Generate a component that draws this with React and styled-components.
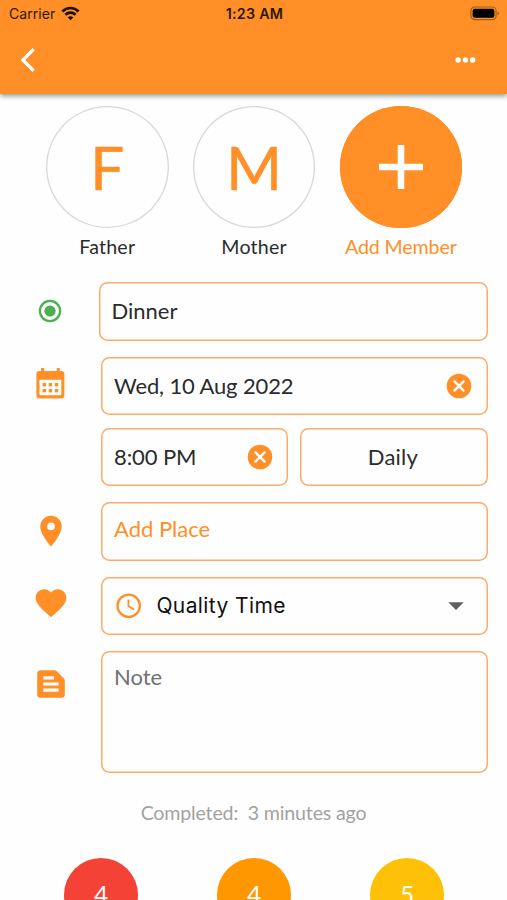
import React from "react";
import styled, { createGlobalStyle } from "styled-components";

const ORANGE = "#ff8f26";

const GlobalStyle = createGlobalStyle`
  *, *::before, *::after { box-sizing: border-box; }
  html, body { margin: 0; height: 100%; background: #fefefe; overflow: hidden; }
  svg { display: block; flex: none; }
`;

const Screen = styled.div`
  width: 507px;
  height: 900px;
  overflow: hidden;
  display: flex;
  flex-direction: column;
  background: #fefefe;
  font-family: Lato, sans-serif;
  color: #2b2b2d;
`;

const AppBar = styled.header`
  flex: none;
  height: 94px;
  background: ${ORANGE};
  box-shadow: 0 2px 5px rgba(0, 0, 0, 0.42);
`;

const StatusBar = styled.div`
  height: 26px;
  padding: 1px 7px 0 9px;
  display: grid;
  grid-template-columns: 1fr auto 1fr;
  align-items: center;
  font-family: Inter, sans-serif;
  font-size: 14px;
  line-height: 22px;
  color: #2b1804;
`;

const Carrier = styled.div`
  display: flex;
  align-items: center;
  gap: 6px;
  letter-spacing: 0.05px;
`;

const Clock = styled.div`
  font-weight: 600;
  font-size: 14.3px;
  letter-spacing: 0.25px;
`;

const BatterySlot = styled.div`
  display: flex;
  justify-content: flex-end;
`;

const Toolbar = styled.div`
  height: 67px;
  padding: 0 31px 0 20px;
  display: flex;
  align-items: center;
  justify-content: space-between;
`;

const IconButton = styled.button`
  display: block;
  padding: 0;
  border: 0;
  background: none;
`;

const Members = styled.section`
  flex: none;
  display: flex;
  gap: 24.3px;
  padding: 12px 0 0 46px;
`;

const Member = styled.div`
  width: 122.5px;
  display: flex;
  flex-direction: column;
  align-items: center;
`;

const Avatar = styled.div`
  width: 122.5px;
  height: 122px;
  border-radius: 50%;
  display: flex;
  align-items: center;
  justify-content: center;
  box-shadow: inset 0 0 0 1.3px ${(p) => (p.$filled ? ORANGE : "#d8d8da")};
  background: ${(p) => (p.$filled ? ORANGE : "transparent")};
  color: ${ORANGE};
  font-size: 60px;
  line-height: 60px;
  -webkit-text-stroke: 0.5px ${ORANGE};
`;

const MemberName = styled.div`
  margin-top: 7px;
  font-size: 19.6px;
  line-height: 24px;
  letter-spacing: ${(p) => (p.$accent ? "-0.1px" : "0.2px")};
  white-space: nowrap;
  color: ${(p) => (p.$accent ? ORANGE : "inherit")};
`;

const Form = styled.section`
  flex: none;
  display: flex;
  flex-direction: column;
  gap: 16px;
  padding: 23px 19.5px 0 0;
`;

const Row = styled.div`
  display: flex;
  align-items: flex-start;
`;

const RowIcon = styled.div`
  flex: none;
  width: ${(p) => p.$width || 101}px;
  height: 58.5px;
  padding-left: ${(p) => p.$left}px;
  padding-top: ${(p) => p.$top}px;
`;

const Fields = styled.div`
  flex: 1;
  display: grid;
  grid-template-columns: 1fr 1fr;
  gap: 12.5px 12px;
`;

const Field = styled.div`
  flex: 1;
  grid-column: ${(p) => (p.$half ? "auto" : "1 / -1")};
  height: ${(p) => p.$height || 58.5}px;
  display: flex;
  align-items: ${(p) => (p.$multiline ? "flex-start" : "center")};
  justify-content: ${(p) => (p.$centered ? "center" : "space-between")};
  padding: 0 ${(p) => p.$right || 15}px 0 13px;
  padding-top: ${(p) => (p.$multiline ? 12 : 0)}px;
  box-shadow: inset 0 0 0 1.5px #fbac68;
  border-radius: 8.5px;
`;

const FieldText = styled.span`
  font-size: 22px;
  line-height: 28px;
  letter-spacing: ${(p) => p.$spacing || 0}px;
  white-space: nowrap;
  color: ${(p) => p.$color || "inherit"};
  margin-bottom: ${(p) => p.$lift || 0}px;
`;

const Choice = styled.span`
  display: flex;
  align-items: center;
  gap: 13px;
  font-family: Inter, sans-serif;
  font-size: 21px;
  letter-spacing: 0.4px;
  color: #111;
`;

const Completed = styled.p`
  flex: none;
  margin: 28px 0 0;
  text-align: center;
  font-size: 19.6px;
  line-height: 24px;
  letter-spacing: -0.17px;
  white-space: pre;
  color: #a2a2a2;
`;

const Scores = styled.section`
  flex: none;
  display: flex;
  justify-content: space-between;
  padding: 33px 63px 0 64px;
`;

const Score = styled.div`
  width: 74px;
  height: 74px;
  border-radius: 50%;
  display: flex;
  align-items: center;
  justify-content: center;
  background: ${(p) => p.$color};
  color: #fff;
  font-size: 24.5px;
  line-height: 30px;
`;

const Wifi = () => (
  <svg width="19" height="15" viewBox="0 0 19 15" fill="none" stroke="#1f1002" strokeWidth="2.7">
    <path d="M1.4 5.5C6 .8 13 .8 17.6 5.5" />
    <path d="M4.4 8.8c2.9-2.8 7.3-2.8 10.2 0" />
    <path d="M9.5 14.3 6.7 11.4c1.5-1.4 4.1-1.4 5.6 0z" fill="#1f1002" stroke="none" />
  </svg>
);

const Battery = () => (
  <svg width="30" height="15" viewBox="0 0 30 15">
    <rect x="0.9" y="1" width="25.2" height="12.6" rx="3.8" fill="none" stroke="#a75d19" strokeWidth="1.2" />
    <rect x="2.6" y="2.8" width="21.8" height="9" rx="2.2" fill="#000" />
    <path d="M27.5 5.2c1.9.8 1.9 3.4 0 4.2z" fill="#a75d19" />
  </svg>
);

const Back = () => (
  <svg width="16" height="26" viewBox="0 0 16 26" fill="none" stroke="#fff" strokeWidth="3.3">
    <path d="M13.6 2.2 2.9 13 13.6 23.8" />
  </svg>
);

const More = () => (
  <svg width="21" height="8" viewBox="0 0 21 8" fill="#fff">
    <circle cx="3.1" cy="4" r="2.7" />
    <circle cx="10.4" cy="4" r="2.7" />
    <circle cx="17.7" cy="4" r="2.7" />
  </svg>
);

const Plus = () => (
  <svg width="44" height="44" viewBox="0 0 44 44" fill="#fff">
    <path d="M18.7 0h6.6v18.7H44v6.6H25.3V44h-6.6V25.3H0v-6.6h18.7z" />
  </svg>
);

const Radio = () => (
  <svg width="28" height="28" viewBox="-0.45 -0.45 24.9 24.9">
    <circle cx="12" cy="12" r="9" fill="none" stroke="#4caf50" strokeWidth="2" />
    <circle cx="12" cy="12" r="5" fill="#4caf50" />
  </svg>
);

const Calendar = () => (
  <svg width="29" height="32" viewBox="0 0 29 32">
    <path
      fill={ORANGE}
      fillRule="evenodd"
      d="M5.1 1h3v3h12.6V1h3v3h1.5a3.2 3.2 0 0 1 3.2 3.2v21a3.2 3.2 0 0 1-3.2 3.2H3.6a3.2 3.2 0 0 1-3.2-3.2v-21A3.2 3.2 0 0 1 3.6 4h1.5zM3.5 12.8v13.9c0 1 .6 1.6 1.6 1.6h18.6c1 0 1.6-.6 1.6-1.6V12.8z"
    />
    <g fill={ORANGE}>
      <rect x="6.6" y="16" width="3.4" height="3.4" />
      <rect x="12.7" y="16" width="3.4" height="3.4" />
      <rect x="18.8" y="16" width="3.4" height="3.4" />
      <rect x="6.6" y="22" width="3.4" height="3.4" />
      <rect x="12.7" y="22" width="3.4" height="3.4" />
      <rect x="18.8" y="22" width="3.4" height="3.4" />
    </g>
  </svg>
);

const Material = ({ d }) => (
  <svg width="38" height="38" viewBox="-0.4 -0.4 24.8 24.8" fill={ORANGE}>
    <path d={d} />
  </svg>
);

const PIN = "M12 2C8.13 2 5 5.13 5 9c0 5.25 7 13 7 13s7-7.75 7-13c0-3.87-3.13-7-7-7zm0 9.5a2.5 2.5 0 1 1 0-5 2.5 2.5 0 0 1 0 5z";
const HEART = "M12 21.35l-1.45-1.32C5.4 15.36 2 12.28 2 8.5 2 5.42 4.42 3 7.5 3c1.74 0 3.41.81 4.5 2.09C13.09 3.81 14.76 3 16.5 3 19.58 3 22 5.42 22 8.5c0 3.78-3.4 6.86-8.55 11.54L12 21.35z";
const NOTE = "M20.41 8.41l-4.83-4.83c-.37-.37-.88-.58-1.41-.58H5c-1.1 0-2 .9-2 2v14c0 1.1.9 2 2 2h14c1.1 0 2-.9 2-2V9.83c0-.53-.21-1.04-.59-1.42zM7 7h7v2H7V7zm10 10H7v-2h10v2zm0-4H7v-2h10v2z";

const Clear = () => (
  <svg width="26" height="26" viewBox="0 0 26 26">
    <circle cx="13" cy="13" r="12.3" fill={ORANGE} />
    <path d="m8.4 8.4 9.2 9.2m0-9.2-9.2 9.2" stroke="#fff" strokeWidth="2.4" strokeLinecap="round" />
  </svg>
);

const Time = () => (
  <svg width="29.4" height="29.4" viewBox="0 0 24 24" fill="none" stroke={ORANGE}>
    <circle cx="12" cy="12" r="9.1" strokeWidth="1.9" />
    <path d="M11.8 7v5.4l4.6 2.7" strokeWidth="1.5" />
  </svg>
);

const Caret = () => (
  <svg width="16" height="8" viewBox="0 0 16 8" fill="#616161">
    <path d="M.3.2h15.4L8 7.9z" />
  </svg>
);

export default function App() {
  return (
    <>
      <GlobalStyle />
      <Screen>
        <AppBar>
          <StatusBar>
            <Carrier>Carrier <Wifi /></Carrier>
            <Clock>1:23 AM</Clock>
            <BatterySlot><Battery /></BatterySlot>
          </StatusBar>
          <Toolbar>
            <IconButton aria-label="Back"><Back /></IconButton>
            <IconButton aria-label="More"><More /></IconButton>
          </Toolbar>
        </AppBar>

        <Members>
          <Member>
            <Avatar>F</Avatar>
            <MemberName>Father</MemberName>
          </Member>
          <Member>
            <Avatar>M</Avatar>
            <MemberName>Mother</MemberName>
          </Member>
          <Member>
            <Avatar $filled><Plus /></Avatar>
            <MemberName $accent>Add Member</MemberName>
          </Member>
        </Members>

        <Form>
          <Row>
            <RowIcon $width={98.5} $left={36} $top={15}><Radio /></RowIcon>
            <Field><FieldText>Dinner</FieldText></Field>
          </Row>
          <Row>
            <RowIcon $left={36.4} $top={10.5}><Calendar /></RowIcon>
            <Fields>
              <Field $right={15.8}><FieldText $spacing={-0.13}>Wed, 10 Aug 2022</FieldText><Clear /></Field>
              <Field $half><FieldText $spacing={-0.1}>8:00 PM</FieldText><Clear /></Field>
              <Field $half $centered><FieldText $spacing={0.2}>Daily</FieldText></Field>
            </Fields>
          </Row>
          <Row>
            <RowIcon $left={32} $top={10}><Material d={PIN} /></RowIcon>
            <Field><FieldText $color={ORANGE} $lift={4}>Add Place</FieldText></Field>
          </Row>
          <Row>
            <RowIcon $left={32} $top={7.5}><Material d={HEART} /></RowIcon>
            <Field $right={23.5}>
              <Choice><Time />Quality Time</Choice>
              <Caret />
            </Field>
          </Row>
          <Row>
            <RowIcon $left={32} $top={14}><Material d={NOTE} /></RowIcon>
            <Field $multiline $height={122}><FieldText $color="#717171">Note</FieldText></Field>
          </Row>
        </Form>

        <Completed>{"Completed:  3 minutes ago"}</Completed>

        <Scores>
          <Score $color="#f44336">4</Score>
          <Score $color="#ff9800">4</Score>
          <Score $color="#ffc107">5</Score>
        </Scores>
      </Screen>
    </>
  );
}
